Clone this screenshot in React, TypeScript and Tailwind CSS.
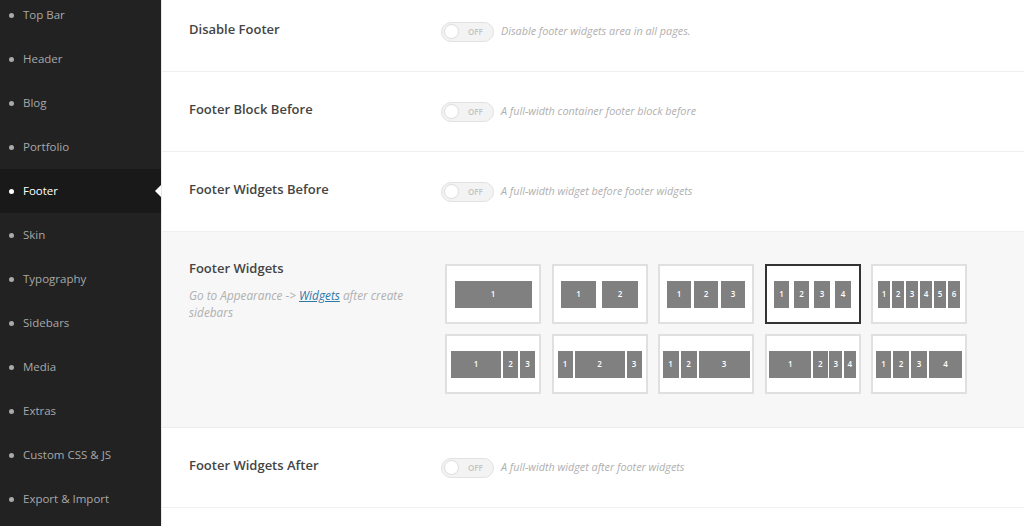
import React from 'react';

const menu = [
    'Top Bar',
    'Header',
    'Blog',
    'Portfolio',
    'Footer',
    'Skin',
    'Typography',
    'Sidebars',
    'Media',
    'Extras',
    'Custom CSS & JS',
    'Export & Import',
];

type Layout = { widths: number[]; gap: number };

// column layouts, bar widths in px
const layouts: Layout[] = [
    { widths: [77], gap: 0 },
    { widths: [35, 36], gap: 6 },
    { widths: [24, 24, 24], gap: 3 },
    { widths: [15, 15, 16, 16], gap: 5 },
    { widths: [12, 12, 12, 12, 12, 12], gap: 2 },
    { widths: [50, 15, 15], gap: 2 },
    { widths: [15, 50, 15], gap: 2 },
    { widths: [16, 16, 51], gap: 2 },
    { widths: [42, 15, 13, 12], gap: 1.5 },
    { widths: [15, 16, 16, 33], gap: 2 },
];

function Toggle() {
    return (
        <div className="flex h-[20px] w-[53px] items-center rounded-full border border-[#e2e2e2] bg-[#f3f3f3] pl-[2px]">
            <span className="h-[15px] w-[15px] rounded-full border border-[#dcdcdc] bg-white" />
            <span className="ml-[9px] text-[8px] font-semibold text-[#c4c4c4]">OFF</span>
        </div>
    );
}

function ToggleRow({ title, desc }: { title: string; desc: string }) {
    return (
        <div className="flex h-[80px] items-center border-b border-[#f0f0f0] bg-white">
            <div className="w-[279px] pb-[4px] pl-[27px] text-[13px] font-semibold text-[#444]">{title}</div>
            <div className="flex items-center">
                <Toggle />
                <span className="ml-[7px] text-[10.8px] italic text-[#b0b0b0]">{desc}</span>
            </div>
        </div>
    );
}

function LayoutBox({ layout, selected }: { layout: Layout; selected?: boolean }) {
    return (
        <div
            className={
                selected
                    ? 'flex h-[60px] w-[96px] items-center justify-center border-2 border-[#333] bg-white'
                    : 'flex h-[60px] w-[96px] items-center justify-center border-2 border-[#e0e0e0] bg-white'
            }
        >
            <div className="flex" style={{ gap: layout.gap }}>
                {layout.widths.map((w, i) => (
                    <div
                        key={i}
                        className="flex h-[27px] items-center justify-center bg-[#808080] text-[8px] font-semibold text-white"
                        style={{ width: w }}
                    >
                        {i + 1}
                    </div>
                ))}
            </div>
        </div>
    );
}

export default function App() {
    return (
        <div className="flex h-[526px] w-[1024px] overflow-hidden bg-white" style={{ fontFamily: '"Open Sans", sans-serif' }}>
            <aside className="relative w-[161px] shrink-0 bg-[#222222]">
                <ul className="-mt-[7px]">
                    {menu.map((item) => {
                        const active = item === 'Footer';
                        return (
                            <li
                                key={item}
                                className={
                                    active
                                        ? 'relative flex h-[44px] items-center bg-[#191919] pl-[9px] text-[11.5px] text-white'
                                        : 'flex h-[44px] items-center pl-[9px] text-[11.5px] text-[#a8a8a8]'
                                }
                            >
                                <span
                                    className={
                                        active
                                            ? 'mr-[9px] h-[5px] w-[5px] rounded-full bg-white'
                                            : 'mr-[9px] h-[5px] w-[5px] rounded-full bg-[#aaaaaa]'
                                    }
                                />
                                {item}
                                {active && (
                                    <span className="absolute right-0 top-1/2 h-0 w-0 -translate-y-1/2 border-y-[6px] border-r-[6px] border-y-transparent border-r-white" />
                                )}
                            </li>
                        );
                    })}
                </ul>
            </aside>
            <main className="flex-1 border-l border-[#e8e8e8]">
                <div className="-mt-[8px]">
                    <ToggleRow title="Disable Footer" desc="Disable footer widgets area in all pages." />
                    <ToggleRow title="Footer Block Before" desc="A full-width container footer block before" />
                    <ToggleRow title="Footer Widgets Before" desc="A full-width widget before footer widgets" />
                    <div className="flex h-[196px] items-start border-b border-[#ededed] bg-[#f7f7f7] pt-[32px]">
                        <div className="-mt-[5px] w-[283px] pl-[27px]">
                            <div className="text-[13px] font-semibold leading-[18px] text-[#444]">Footer Widgets</div>
                            <p className="mt-[10px] w-[240px] text-[11.8px] italic leading-[17px] text-[#b0b0b0]">
                                Go to Appearance -&gt; <a className="text-[#2d78ab] underline">Widgets</a> after create
                                sidebars
                            </p>
                        </div>
                        <div className="grid grid-cols-[repeat(5,96px)] gap-x-[10.5px] gap-y-[10px]">
                            {layouts.map((l, i) => (
                                <LayoutBox key={i} layout={l} selected={i === 3} />
                            ))}
                        </div>
                    </div>
                    <ToggleRow title="Footer Widgets After" desc="A full-width widget after footer widgets" />
                </div>
            </main>
        </div>
    );
}
